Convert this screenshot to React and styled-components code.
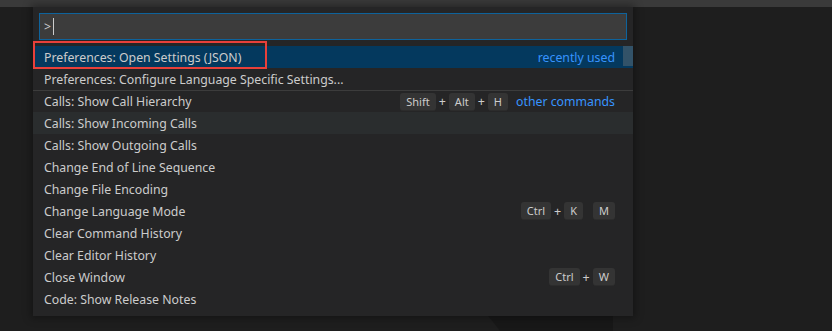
import React from "react";
import styled, { createGlobalStyle } from "styled-components";

const Global = createGlobalStyle`
  html, body { margin: 0; padding: 0; background: #1e1e1e; }
  body { width: 832px; height: 331px; overflow: hidden; font-family: "Noto Sans", "Open Sans", sans-serif; }
`;

const Page = styled.div`
  position: relative;
  width: 832px;
  height: 331px;
  background: #1e1e1e;
  overflow: hidden;
`;

const TitleBar = styled.div`
  height: 7px;
  background: #3a3a3a;
`;

const Stage = styled.div`
  position: relative;
  padding-left: 33px;
`;

const Watermark = styled.svg`
  position: absolute;
  left: 0;
  top: 0;
  pointer-events: none;
`;

const Widget = styled.div`
  position: relative;
  z-index: 1;
  width: 600px;
  background: #252526;
  box-shadow: 0 0 8px 2px rgba(0, 0, 0, 0.36);
  padding: 6px 0 6px;
  box-sizing: border-box;
`;

const InputWrap = styled.div`
  margin: 0 6px 6px;
  height: 27px;
  box-sizing: border-box;
  background: #3c3c3c;
  border: 1px solid #0e639c;
  display: flex;
  align-items: center;
  padding-left: 4px;
  color: #cccccc;
  font-size: 12.3px;
`;

const Caret = styled.span`
  display: inline-block;
  width: 1px;
  height: 17px;
  background: #cccccc;
  margin-left: 2px;
`;

const List = styled.div`
  position: relative;
`;

const Row = styled.div`
  height: 22px;
  box-sizing: border-box;
  display: flex;
  align-items: center;
  padding: 0 18px 0 11px;
  font-size: 12.3px;
  color: #cccccc;
  background: ${(p) => (p.$selected ? "#04395e" : p.$hover ? "#2a2d2e" : "transparent")};
  border-top: ${(p) => (p.$separator ? "1px solid #3c3c3c" : "none")};
  white-space: nowrap;
`;

const Label = styled.span`
  flex: 1;
`;

const Detail = styled.span`
  color: #3794ff;
  margin-left: 8px;
`;

const Keys = styled.span`
  display: flex;
  align-items: center;
  font-size: 11px;
  color: #cccccc;
`;

const Chord = styled.span`
  display: flex;
  align-items: center;
  & + & {
    margin-left: 10px;
  }
`;

const Key = styled.span`
  display: inline-flex;
  align-items: center;
  justify-content: center;
  height: 18px;
  min-width: 18px;
  padding: 0 6px;
  box-sizing: border-box;
  border-radius: 3px;
  background: #343434;
  border-bottom: 1px solid #2c2c2c;
`;

const Plus = styled.span`
  margin: 0 3px;
  font-size: 12.5px;
`;

const Slider = styled.div`
  position: absolute;
  right: 0;
  top: 0;
  width: 10px;
  height: 20px;
  background: rgba(121, 121, 121, 0.4);
`;

const Highlight = styled.div`
  position: absolute;
  left: 0;
  top: -5px;
  width: 234px;
  height: 28px;
  box-sizing: border-box;
  border: 2px solid #e8403a;
  pointer-events: none;
`;

const KeyCombo = ({ chords }) => (
  <Keys>
    {chords.map((chord, ci) => (
      <Chord key={ci}>
        {chord.map((k, i) => (
          <React.Fragment key={i}>
            {i > 0 && <Plus>+</Plus>}
            <Key>{k}</Key>
          </React.Fragment>
        ))}
      </Chord>
    ))}
  </Keys>
);

const items = [
  { label: "Preferences: Open Settings (JSON)", detail: "recently used", selected: true },
  { label: "Preferences: Configure Language Specific Settings..." },
  { label: "Calls: Show Call Hierarchy", keys: [["Shift", "Alt", "H"]], detail: "other commands", separator: true },
  { label: "Calls: Show Incoming Calls", hover: true },
  { label: "Calls: Show Outgoing Calls" },
  { label: "Change End of Line Sequence" },
  { label: "Change File Encoding" },
  { label: "Change Language Mode", keys: [["Ctrl", "K"], ["M"]] },
  { label: "Clear Command History" },
  { label: "Clear Editor History" },
  { label: "Close Window", keys: [["Ctrl", "W"]] },
  { label: "Code: Show Release Notes" },
];

export default function App() {
  return (
    <>
      <Global />
      <Page>
        <TitleBar />
        <Stage>
          <Watermark width="832" height="324" viewBox="0 0 832 324">
            <polygon points="478,296 613,296 613,324 500,324" fill="rgba(0,0,0,0.18)" />
          </Watermark>
          <Widget>
            <InputWrap>
              &gt;
              <Caret />
            </InputWrap>
            <List>
              {items.map((it, i) => (
                <Row key={i} $selected={it.selected} $hover={it.hover} $separator={it.separator}>
                  <Label>{it.label}</Label>
                  {it.keys && <KeyCombo chords={it.keys} />}
                  {it.detail && <Detail>{it.detail}</Detail>}
                </Row>
              ))}
              <Slider />
              <Highlight />
            </List>
          </Widget>
        </Stage>
      </Page>
    </>
  );
}
